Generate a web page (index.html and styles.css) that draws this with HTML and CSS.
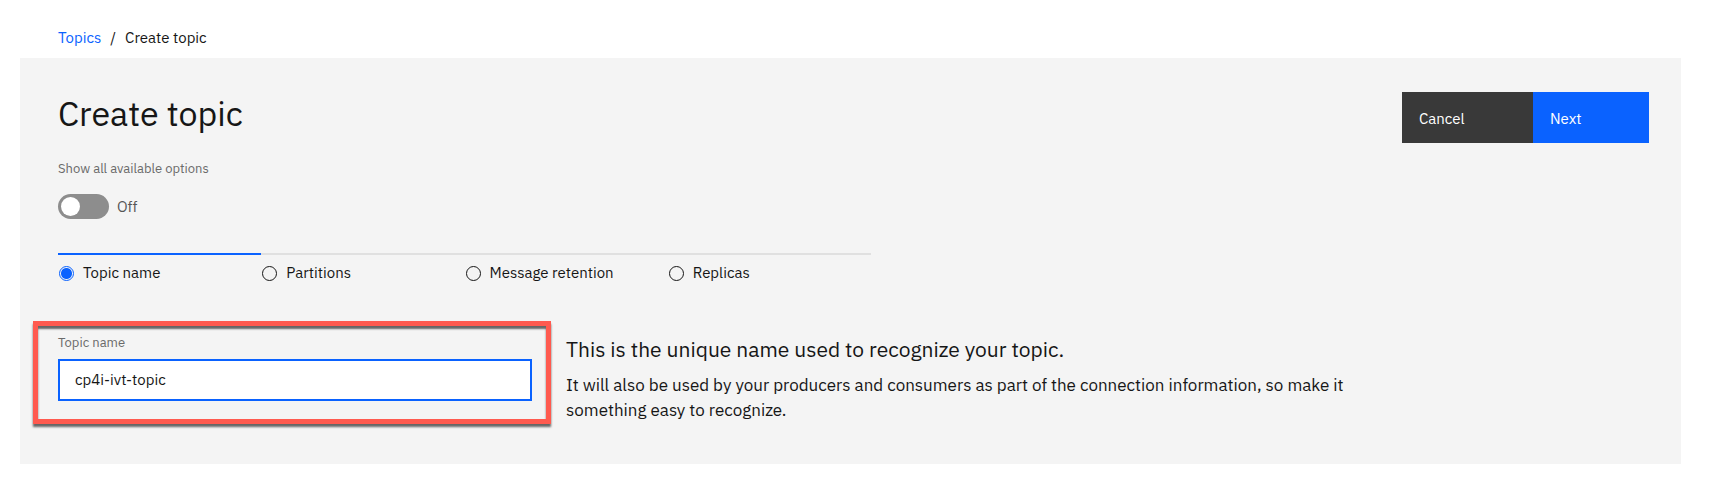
FILE: index.html
```html
<!DOCTYPE html>
<html lang="en">
<head>
<meta charset="utf-8">
<meta name="viewport" content="width=device-width, initial-scale=1">
<title>Create topic</title>
<link rel="stylesheet" href="styles.css">
</head>
<body>
<div class="page">
  <nav class="breadcrumb" aria-label="Breadcrumb">
    <a class="breadcrumb-link" href="#">Topics</a>
    <span>/</span>
    <span>Create topic</span>
  </nav>
  <main class="panel">
    <header class="panel-header">
      <h1 class="title">Create topic</h1>
      <div class="actions">
        <button class="button button-cancel" type="button">Cancel</button>
        <button class="button button-next" type="button">Next</button>
      </div>
    </header>
    <div class="options">
      <label class="label" for="show-all">Show all available options</label>
      <div class="toggle-row">
        <input class="toggle" type="checkbox" role="switch" id="show-all">
        <span class="toggle-state">Off</span>
      </div>
    </div>
    <div class="steps" role="radiogroup" aria-label="Steps">
      <label class="step"><input class="step-radio" type="radio" name="step" checked><span>Topic name</span></label>
      <label class="step"><input class="step-radio" type="radio" name="step"><span>Partitions</span></label>
      <label class="step"><input class="step-radio" type="radio" name="step"><span>Message retention</span></label>
      <label class="step"><input class="step-radio" type="radio" name="step"><span>Replicas</span></label>
    </div>
    <section class="content">
      <div class="field">
        <label class="label" for="topic-name">Topic name</label>
        <input class="text-input" type="text" id="topic-name" value="cp4i-ivt-topic">
        <div class="highlight"></div>
      </div>
      <div class="help">
        <h2 class="help-title">This is the unique name used to recognize your topic.</h2>
        <p class="help-text">It will also be used by your producers and consumers as part of the connection information, so make it something easy to recognize.</p>
      </div>
    </section>
  </main>
</div>
</body>
</html>
```
FILE: styles.css
```css
* {
  box-sizing: border-box;
}

body {
  margin: 0;
  background: #fff;
  color: #161616;
  font-family: "IBM Plex Sans", Roboto, "Liberation Sans", sans-serif;
  font-size: 15px;
  line-height: 20px;
}

.page {
  padding: 28px 35px 40px 20px;
}

.breadcrumb {
  display: flex;
  gap: 9px;
  padding: 0 38px 10px;
}

.breadcrumb-link {
  color: #0a62ff;
  text-decoration: none;
}

.panel {
  padding: 34px 32px 41px 38px;
  background: #f4f4f4;
}

.panel-header {
  display: flex;
  justify-content: space-between;
  align-items: flex-start;
}

.title {
  margin: 0;
  font-size: 34px;
  font-weight: 400;
  line-height: 42px;
}

.actions {
  display: flex;
}

.button {
  height: 51px;
  padding: 2px 17px 0;
  border: 0;
  color: #fff;
  font: inherit;
  text-align: left;
}

.button-cancel {
  width: 131px;
  background: #393939;
}

.button-next {
  width: 116px;
  background: #0a62ff;
}

.options {
  padding-top: 17px;
}

.label {
  display: block;
  color: #6a6a6a;
  font-size: 13px;
  line-height: 18px;
}

.toggle-row {
  display: flex;
  align-items: center;
  gap: 8px;
  padding-top: 16px;
}

.toggle {
  display: flex;
  align-items: center;
  width: 51px;
  height: 25px;
  margin: 0;
  padding: 3px;
  appearance: none;
  border-radius: 13px;
  background: #8d8d8d;
}

.toggle::before {
  content: "";
  width: 19px;
  height: 19px;
  border-radius: 50%;
  background: #fff;
}

.toggle:checked {
  justify-content: flex-end;
  background: #24a148;
}

.toggle-state {
  color: #565656;
}

.steps {
  display: grid;
  grid-template-columns: repeat(4, 1fr);
  max-width: 813px;
  padding-top: 34px;
}

.step {
  display: flex;
  align-items: center;
  gap: 9px;
  padding: 8px 1px 0;
  border-top: 2px solid #e0e0e0;
}

.step:has(:checked) {
  border-top-color: #0a62ff;
}

.step-radio {
  width: 15px;
  height: 15px;
  margin: 0;
  appearance: none;
  border: 1px solid #161616;
  border-radius: 50%;
}

.step-radio:checked {
  border-color: #0a62ff;
  background: radial-gradient(circle, #0a62ff 5px, transparent 6px);
}

.content {
  display: grid;
  grid-template-columns: 474px minmax(0, 800px);
  gap: 34px;
  padding-top: 51px;
}

.field {
  position: relative;
}

.text-input {
  width: 100%;
  height: 42px;
  margin-top: 7px;
  padding: 0 15px 1px;
  border: 2px solid #0a62ff;
  border-radius: 0;
  background: #fff;
  color: #161616;
  font: inherit;
  outline: 0;
}

.highlight {
  position: absolute;
  inset: -13px -19px auto -25px;
  height: 103px;
  border: 5px solid #ff5a4f;
  box-shadow: 0 3px 2px #666, inset 0 3px 2px #666;
  pointer-events: none;
}

.help-title {
  margin: 0;
  font-size: 21px;
  font-weight: 400;
  line-height: 30px;
}

.help-text {
  margin: 9px 0 0;
  font-size: 17px;
  line-height: 25px;
}
```
